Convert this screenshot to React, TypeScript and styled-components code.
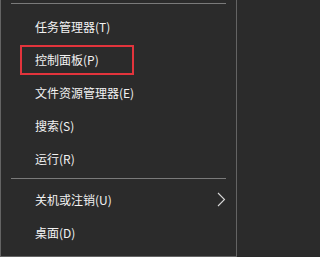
import React from 'react';
import styled, { createGlobalStyle } from 'styled-components';

const GlobalStyle = createGlobalStyle`
  html, body {
    margin: 0;
    padding: 0;
    background: #2b2b2b;
  }
`;

const Menu = styled.div`
  width: 237px;
  height: 257px;
  box-sizing: border-box;
  background: #2b2b2b;
  border: 1px solid #646464;
  border-top: none;
  padding-top: 3px;
  font-family: 'Noto Sans CJK SC', 'Liberation Sans', sans-serif;
  font-size: 12px;
  color: #f2f2f2;
`;

const Separator = styled.div<{ $below: number; $above?: number }>`
  height: 1px;
  background: #7a7a7a;
  margin: ${(p) => p.$above ?? 0}px 10px ${(p) => p.$below}px 10px;
`;

const Item = styled.div`
  height: 33px;
  display: flex;
  align-items: center;
  padding: 0 10px 0 34px;
`;

const Label = styled.span<{ $marked?: boolean }>`
  display: flex;
  align-items: center;
  line-height: 1;
  ${(p) =>
    p.$marked &&
    `
    box-sizing: border-box;
    width: 114px;
    height: 30px;
    margin-left: -15px;
    padding-left: 13px;
    border: 2px solid #e2343c;
  `}
`;

const Chevron = styled.svg`
  margin-left: auto;
  width: 9px;
  height: 15px;
`;

type Entry = { label: string; marked?: boolean; submenu?: boolean };

const groupA: Entry[] = [
  { label: '任务管理器(T)' },
  { label: '控制面板(P)', marked: true },
  { label: '文件资源管理器(E)' },
  { label: '搜索(S)' },
  { label: '运行(R)' },
];

const groupB: Entry[] = [
  { label: '关机或注销(U)', submenu: true },
  { label: '桌面(D)' },
];

function MenuItem({ label, marked, submenu }: Entry) {
  return (
    <Item>
      <Label $marked={marked}>{label}</Label>
      {submenu && (
        <Chevron viewBox='0 0 9 15'>
          <polyline
            points='1,1 7.5,7.5 1,14'
            fill='none'
            stroke='#d8d8d8'
            strokeWidth='1.1'
          />
        </Chevron>
      )}
    </Item>
  );
}

export default function App() {
  return (
    <>
      <GlobalStyle />
      <Menu>
        <Separator $below={6} />
        {groupA.map((e, i) => (
          <MenuItem key={i} {...e} />
        ))}
        <Separator $above={3} $below={4} />
        {groupB.map((e, i) => (
          <MenuItem key={i} {...e} />
        ))}
      </Menu>
    </>
  );
}
